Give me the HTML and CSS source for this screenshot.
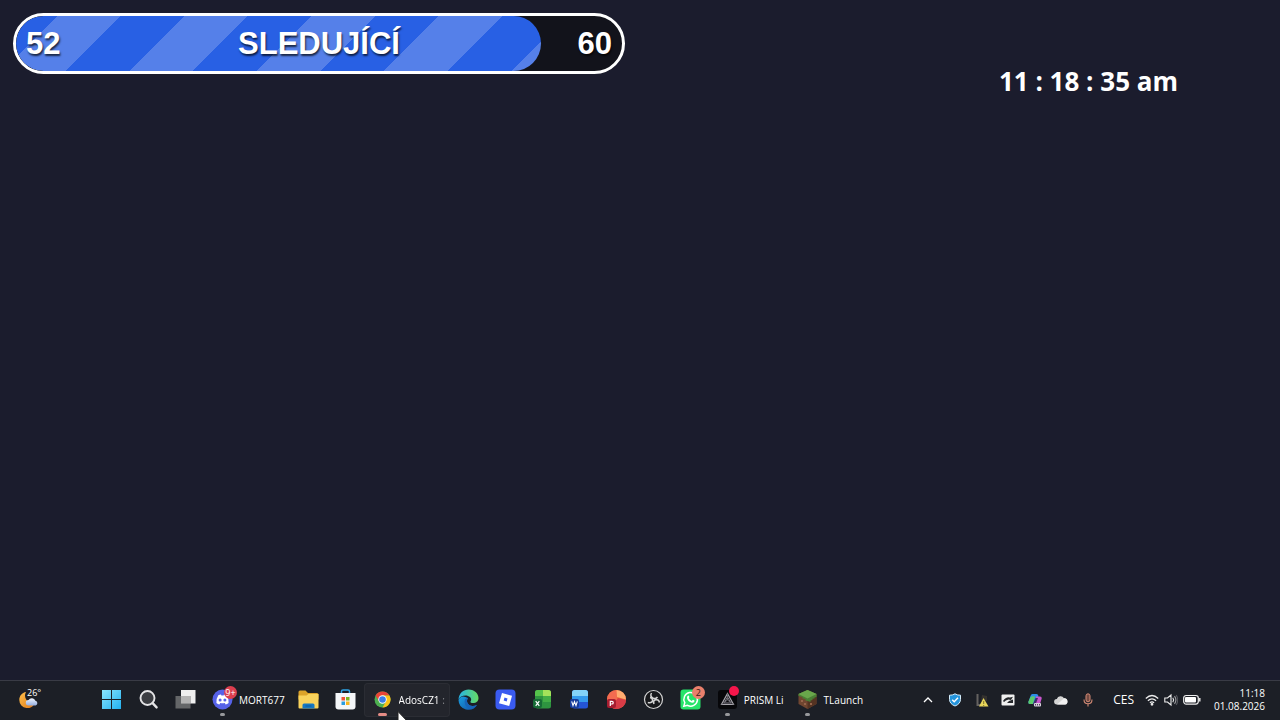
FILE: index.html
```html
<!DOCTYPE html>
<html lang="cs">
<head>
    <meta charset="UTF-8">
    <meta name="viewport" content="width=device-width, initial-scale=1.0">
    <title>Sledující</title>
    <link rel="stylesheet" href="styles.css">
</head>
<body>
    <main class="overlay">
        <div class="goal" role="progressbar" aria-label="Sledující" aria-valuemin="0" aria-valuemax="60" aria-valuenow="52">
            <div class="goal-fill" style="width: 86.67%"></div>
            <span class="goal-current">52</span>
            <span class="goal-title">SLEDUJÍCÍ</span>
            <span class="goal-target">60</span>
        </div>
        <time class="clock">11 : 18 : 35 am</time>
    </main>

    <footer class="taskbar">
        <button class="weather" aria-label="Weather">
            <svg width="20" height="20" viewBox="0 0 20 20">
                <defs><linearGradient id="moon" x1="0" y1="0" x2="1" y2="1"><stop offset="0" stop-color="#ffc04a"/><stop offset="1" stop-color="#e07a1c"/></linearGradient>
                <linearGradient id="cloud" x1="0" y1="0" x2="0" y2="1"><stop offset="0" stop-color="#f2f6ff"/><stop offset="1" stop-color="#93addf"/></linearGradient></defs>
                <path d="M7 2C4 7 8 13 15 14.500C13 17.500 10 18.500 7.500 18A8 8 0 0 1 0.300 10C0.300 6 3 2.600 7 2Z" fill="url(#moon)"/>
                <path d="M9.500 15.500a2.700 2.700 0 0 1 0-5.400a3.900 3.900 0 0 1 6.900 0.600a2.500 2.500 0 0 1 0.300 4.800Z" fill="url(#cloud)"/>
            </svg>
            <span class="weather-temp">26°</span>
        </button>

        <nav class="apps" aria-label="Apps">
            <button class="app" aria-label="Start">
                <svg width="21" height="21" viewBox="0 0 21 21">
                    <defs><linearGradient id="win" x1="0" y1="0" x2="1" y2="1" ><stop offset="0" stop-color="#8be6ff"/><stop offset="1" stop-color="#22b0ef"/></linearGradient></defs>
                    <path d="M1 1h9v9H1zM11 1h9v9h-9zM1 11h9v9H1zM11 11h9v9h-9z" fill="url(#win)"/>
                </svg>
            </button>
            <button class="app" aria-label="Search">
                <svg width="21" height="21" viewBox="0 0 21 21">
                    <circle cx="9.500" cy="9" r="7" fill="#3b3d42" stroke="#e4e4e6" stroke-width="1.900"/>
                    <path d="M14.600 14.200l4 4.200" stroke="#e4e4e6" stroke-width="2.400" stroke-linecap="round"/>
                </svg>
            </button>
            <button class="app" aria-label="Task view">
                <svg width="21" height="21" viewBox="0 0 21 21">
                    <path d="M6 1h14.500v13.500H6z" fill="#efefef"/>
                    <path d="M0.500 7H15.500V19.500H0.500z" fill="#6d6e70" fill-opacity="0.900"/>
                    <path d="M6 7h9.500v7.500H6z" fill="#b4b4b4"/>
                </svg>
            </button>
            <button class="app labelled running">
                <svg width="21" height="21" viewBox="0 0 21 21">
                    <circle cx="10.500" cy="10.500" r="10" fill="#5662e8"/>
                    <path d="M6.300 6.300Q8 5.400 9 5.500l0.400 0.900h2.200l0.400-0.900q1 0 2.700 0.800q2.300 3.600 1.900 7.600q-1.500 1.200-3 1.500l-0.800-1.400q-2.300 0.500-4.600 0l-0.800 1.400q-1.500-0.300-3-1.500q-0.400-4 1.900-7.600Z" fill="#fff"/>
                    <circle cx="8.100" cy="10.900" r="1.500" fill="#5662e8"/><circle cx="12.900" cy="10.900" r="1.500" fill="#5662e8"/>
                </svg>
                <span class="badge badge-discord">9+</span>
                <span class="app-label">MORT677</span>
            </button>
            <button class="app" aria-label="File Explorer">
                <svg width="21" height="21" viewBox="0 0 21 21">
                    <path d="M0.500 3q0-1.500 1.500-1.500h5.500l2.500 2.500h9q1.500 0 1.500 1.500v5H0.500z" fill="#dca329"/>
                    <path d="M0.500 6.500h8L10.500 5H20.500v13.500q0 1-1 1h-18q-1 0-1-1z" fill="#f9d35c"/>
                    <path d="M4.500 19.500v-3.500q0-1.500 1.500-1.500h9q1.500 0 1.500 1.500v3.500z" fill="#1678c2"/>
                    <path d="M7.500 17h6" stroke="#0c5a9c"/>
                </svg>
            </button>
            <button class="app" aria-label="Microsoft Store">
                <svg width="21" height="21" viewBox="0 0 21 21">
                    <path d="M6.500 5V2.500q0-1.500 1.500-1.500h5q1.500 0 1.500 1.500V5" fill="none" stroke="#2da4e5" stroke-width="1.500"/>
                    <path d="M0.500 4h20v13.500q0 3-3 3h-14q-3 0-3-3z" fill="#f4f6f8"/>
                    <path d="M6.500 8h3.500v3.500H6.500z" fill="#ed5535"/><path d="M11 8h3.500v3.500H11z" fill="#7ab51d"/>
                    <path d="M6.500 12.500h3.500V16H6.500z" fill="#2a9de0"/><path d="M11 12.500h3.500V16H11z" fill="#f8b51c"/>
                </svg>
            </button>
            <button class="app labelled active running">
                <svg width="21" height="21" viewBox="0 0 21 21">
                    <circle cx="10.500" cy="10.500" r="8" fill="#4caf50"/>
                    <path d="M3.570 6.500A8 8 0 0 1 17.430 6.500H10.500L7.040 12.500Z" fill="#ea4335"/>
                    <path d="M17.430 6.500A8 8 0 0 1 10.500 18.500L13.960 12.500L10.500 6.500Z" fill="#fbc116"/>
                    <circle cx="10.500" cy="10.500" r="4.200" fill="#fff"/><circle cx="10.500" cy="10.500" r="3.300" fill="#3b7de8"/>
                </svg>
                <span class="app-label fade">AdosCZ1 :</span>
            </button>
            <button class="app" aria-label="Edge">
                <svg width="21" height="21" viewBox="0 0 21 21">
                    <defs><linearGradient id="edgeTop" x1="0" y1="0.500" x2="1" y2="0.500"><stop offset="0" stop-color="#26b5e8"/><stop offset="1" stop-color="#66db62"/></linearGradient>
                    <linearGradient id="edgeLow" x1="0" y1="0" x2="1" y2="1"><stop offset="0" stop-color="#1a9de0"/><stop offset="1" stop-color="#1153a8"/></linearGradient></defs>
                    <path d="M0.500 11A10 10 0 0 0 19 16Q12 18.500 9.500 14Q8 11 10 9Q3 5 0.500 11Z" fill="url(#edgeLow)"/>
                    <path d="M0.500 10.500C1 4 5.500 0.500 10.500 0.500C17 0.500 20.500 5 20.500 9C20.500 13 17 14.500 14 14Q11.500 13.500 13 11.500C14 9 11 6.500 7.500 6.500Q2.500 6.500 0.500 10.500Z" fill="url(#edgeTop)"/>
                    <path d="M7 10Q5 17 12 20Q16.500 19.500 19 16Q12 18.500 9.500 14Q8.500 11.500 10 9Z" fill="#1764b9"/>
                </svg>
            </button>
            <button class="app" aria-label="Roblox">
                <svg width="21" height="21" viewBox="0 0 21 21">
                    <rect x="0.500" y="0.500" width="20" height="20" rx="4" fill="#3a5bf0"/>
                    <path d="M7 4l10 2.800L14.200 17L4 14.200Z" fill="#fff"/><path d="M9.500 8.600l3 0.800l-0.800 3l-3-0.800Z" fill="#3a5bf0"/>
                </svg>
            </button>
            <button class="app" aria-label="Excel">
                <svg width="21" height="21" viewBox="0 0 21 21">
                    <rect x="3" y="1" width="16" height="18.500" rx="2.500" fill="#2e9440"/>
                    <path d="M11 1h5.500q2.500 0 2.500 2.500V7h-8z" fill="#a5e35a"/><path d="M5.500 1H11v6H3V3.500Q3 1 5.500 1Z" fill="#55c24b"/>
                    <path d="M11 7h8v6h-8z" fill="#43ae46"/><rect x="1" y="10" width="9" height="9" rx="2" fill="#176b36"/>
                    <path d="M3.700 12.200l3.600 4.600M7.300 12.200l-3.600 4.600" stroke="#fff" stroke-width="1.200"/>
                </svg>
            </button>
            <button class="app" aria-label="Word">
                <svg width="21" height="21" viewBox="0 0 21 21">
                    <rect x="3" y="1" width="16" height="18.500" rx="2.500" fill="#2455d6"/>
                    <path d="M3 7.500V3.500Q3 1 5.500 1h11q2.500 0 2.500 2.500v4z" fill="#83d3f8"/><path d="M3 7h16v6H3z" fill="#359bec"/>
                    <rect x="1" y="10" width="9" height="9" rx="2" fill="#173c9c"/>
                    <path d="M2.700 12.400l1.300 4.200l1.500-4l1.500 4l1.300-4.200" fill="none" stroke="#fff" stroke-width="1.100"/>
                </svg>
            </button>
            <button class="app" aria-label="PowerPoint">
                <svg width="21" height="21" viewBox="0 0 21 21">
                    <circle cx="10.500" cy="10.500" r="9.500" fill="#ef6b3b"/>
                    <path d="M10.500 1A9.500 9.500 0 0 0 1 10.500L11 11Z" fill="#f36b50"/>
                    <path d="M10.500 1A9.500 9.500 0 0 1 20 10.500L11 8Z" fill="#ffad70"/>
                    <path d="M20 11A9.500 9.500 0 0 1 5 18.200L12 9Z" fill="#d83b46"/>
                    <rect x="1" y="10" width="9" height="9" rx="2" fill="#a71d30"/>
                    <path d="M4.300 17v-4.700h1.600a1.300 1.300 0 0 1 0 2.700H4.300" fill="none" stroke="#fff" stroke-width="1.200"/>
                </svg>
            </button>
            <button class="app" aria-label="OBS Studio">
                <svg width="21" height="21" viewBox="0 0 21 21" fill="none" stroke="#d3d3d3">
                    <circle cx="10.500" cy="10.500" r="9" fill="#17181b" stroke-width="1.200"/>
                    <path d="M8.500 4Q6.500 7.500 10.500 9.500Q13 10 14.500 8M16.500 13.500Q15.800 9.800 11.800 11Q9.800 12.500 11 15M4.800 13.500Q8.800 14.500 9.700 11.500Q9.500 9 7 8.500" stroke-width="1.500"/>
                </svg>
            </button>
            <button class="app" aria-label="WhatsApp">
                <svg width="21" height="21" viewBox="0 0 21 21">
                    <rect x="0.500" y="0.500" width="20" height="20" rx="3" fill="#27e46a"/>
                    <path d="M3.800 17.200l1-3.500A6.800 6.800 0 1 1 7.500 16.300Z" fill="none" stroke="#fff" stroke-width="1.500"/>
                    <path d="M7.500 7q1-1.200 1.800 0.800q0.200 0.600-0.600 1.300q1 2 3 2.800l1-1q0.500-0.200 1.900 0.800q0 2.200-2.600 2Q7.500 12.500 7 9Q7 7.800 7.500 7Z" fill="#fff"/>
                </svg>
                <span class="badge badge-whatsapp">2</span>
            </button>
            <button class="app labelled running">
                <svg width="21" height="21" viewBox="0 0 21 21">
                    <rect x="1" y="1" width="19" height="19" rx="3" fill="#07070a"/>
                    <path d="M10.500 4.500L16.500 15.500H4.500Z" fill="none" stroke="#a7a5ac" stroke-width="1.200"/>
                    <path d="M10.500 8L14 14H7Z" fill="none" stroke="#85828c"/><path d="M10.500 4.500V11l6 4.500M10.500 11l-6 4.500" stroke="#68666e"  fill="none"/>
                </svg>
                <span class="badge badge-dot"></span>
                <span class="app-label">PRISM Li</span>
            </button>
            <button class="app labelled running">
                <svg width="21" height="21" viewBox="0 0 21 21">
                    <path d="M10.500 1L19.500 5v10L10.500 20L1.500 15V5Z" fill="#704630"/>
                    <path d="M10.500 9.500L19.500 5v10L10.500 20Z" fill="#543322"/>
                    <path d="M10.500 1L19.500 5v3l-2 0.500v1l-2 0.300v1.200l-2 0.500v1.500l-3-1l-2-0.500V10l-3-0.500V8l-4-1V5Z" fill="#4a7f35"/>
                    <path d="M10.500 1L19.500 5L10.500 9.500L1.500 5Z" fill="#69a64b"/>
                    <path d="M4 11h2v2H4zM7 14h2v2H7zM13 14h2v2h-2z" fill="#95644a"/>
                </svg>
                <span class="app-label">TLaunch</span>
            </button>
        </nav>

        <div class="tray">
            <div class="tray-icons">
                <button class="tray-icon" aria-label="Show hidden icons">
                    <svg width="14" height="14" viewBox="0 0 14 14"><path d="M3 9l4-4l4 4" fill="none" stroke="#fff" stroke-width="1.300"/></svg>
                </button>
                <button class="tray-icon" aria-label="Security">
                    <svg width="14" height="14" viewBox="0 0 14 14"><path d="M7 0.800Q9.500 2.400 12.500 2.200V6.500Q12.300 11 7 13Q1.700 11 1.500 6.500V2.200Q4.500 2.400 7 0.800Z" fill="#2494dc" stroke="#d5edfb"/><path d="M4.200 6.700l2 2l3.800-4" fill="none" stroke="#fff" stroke-width="1.400"/></svg>
                </button>
                <button class="tray-icon" aria-label="Warning">
                    <svg width="14" height="14" viewBox="0 0 14 14"><path d="M1.500 1h2v10h3v2h-5z" fill="#646260"/><path d="M7 2l5 1v5H6z" fill="#34322f"/><path d="M8.500 5L13.500 13.500H4Z" fill="#e8d65b"/><path d="M8.700 8v3M8.700 12v1" stroke="#81752c"/></svg>
                </button>
                <button class="tray-icon" aria-label="Graphics">
                    <svg width="14" height="14" viewBox="0 0 14 14"><rect x="0.500" y="1.500" width="13" height="11" rx="1" fill="#f0f0f0"/><path d="M2 8Q5 3.500 9 4.500l3-0.700L10 7L7.500 6.500Q4.500 7 3 9M8 8l4-1.500V10H6Z" fill="#25272b"/></svg>
                </button>
                <button class="tray-icon" aria-label="Copilot">
                    <svg width="14" height="14" viewBox="0 0 14 14">
                        <path d="M4.500 1h4q1.500 0 2 2L8 9.500Q7.500 11 6 11H2Q0 11 0.500 8.500L2.500 3Q3 1 4.500 1Z" fill="#2d8ee8"/>
                        <path d="M2.500 4Q3.500 3 7 3.500L5 11H2Q0 11 0.500 8.500Z" fill="#5bcb6b"/>
                        <path d="M8 3.500h4q2 0 1.700 2L12 11q-0.500 2-2.500 2H6Q7.500 12.500 8 10Z" fill="#c956ce"/>
                        <path d="M7.500 5L5 11l1 1.500Q8 12 8.500 9L10 5Z" fill="#402b68"/><rect x="6" y="10" width="7" height="3.500" rx="1" fill="#d8d0df"/><path d="M7.500 11v1.500M9.500 11v1.500M11.500 11v1.500" stroke="#59465e"/>
                    </svg>
                </button>
                <button class="tray-icon" aria-label="OneDrive">
                    <svg width="14" height="14" viewBox="0 0 14 14"><path d="M3 11.500a2.800 2.800 0 0 1-0.200-5.600A4 4 0 0 1 10 5.200a3.200 3.200 0 0 1 1 6.300Z" fill="#d4d4d4"/><path d="M3 11.500L10 5.200a3.200 3.200 0 0 1 1 6.300Z" fill="#f1f1f1"/></svg>
                </button>
                <button class="tray-icon" aria-label="Microphone">
                    <svg width="14" height="14" viewBox="0 0 14 14" fill="none" stroke="#d58b76"><rect x="5" y="0.800" width="4" height="8" rx="2" fill="#734b42"/><path d="M3 6.500Q3 10.800 7 10.800T11 6.500M7 10.800v2.700" stroke-width="1.100"/></svg>
                </button>
            </div>
            <button class="language">CES</button>
            <button class="quick-settings" aria-label="Network, sound, battery">
                <svg width="14" height="14" viewBox="0 0 14 14" fill="none" stroke="#eee" stroke-width="1.200"><path d="M0.800 5.500Q7-0.500 13.200 5.500M2.900 7.700Q7 4 11.100 7.700M4.900 9.800Q7 8 9.100 9.800"/><circle cx="7" cy="11.300" r="0.800" fill="#eee"/></svg>
                <svg width="14" height="14" viewBox="0 0 14 14" fill="none" stroke="#eee" stroke-width="1.100"><path d="M0.800 5h2.700L7 2v10L3.500 9H0.800ZM8.800 4.800q1.600 2.200 0 4.400"/><path d="M10.500 3.200q2.800 3.800 0 7.600" stroke="#a0a0a3"/><path d="M12.200 2q3 5 0 10" stroke="#55575d"/></svg>
                <svg width="18" height="14" viewBox="0 0 18 14"><rect x="0.700" y="2.500" width="14.600" height="8.600" rx="2.500" fill="none" stroke="#eee" stroke-width="1.200"/><rect x="2" y="4" width="11" height="5.600" rx="1" fill="#fff"/><path d="M16.800 5v3.600" stroke="#eee" stroke-width="1.400"/></svg>
            </button>
            <button class="datetime">
                <span>11:18</span>
                <span>01.08.2026</span>
            </button>
        </div>
    </footer>

    <svg class="cursor" width="14" height="20" viewBox="0 0 14 20"><path d="M1 0.500V17l3.800-3.600L7.500 19l2.500-1l-2.500-5.500h5Z" fill="#fff" stroke="#222"/></svg>
</body>
</html>
```
FILE: styles.css
```css
* {
    box-sizing: border-box;
}
body {
    display: flex;
    flex-direction: column;
    height: 100vh;
    margin: 0;
    overflow: hidden;
    background-color: #1b1c2d;
    color: white;
    font-family: "Open Sans", "Noto Sans", sans-serif;
}
button {
    border: none;
    padding: 0;
    background: none;
    color: inherit;
    font: inherit;
}
svg {
    display: block;
    flex-shrink: 0;
}
.overlay {
    display: flex;
    flex: 1;
    align-items: flex-start;
    justify-content: space-between;
    padding: 13px;
}

/* follower goal */
.goal {
    position: relative;
    display: flex;
    align-items: center;
    justify-content: space-between;
    width: 49%;
    max-width: 612px;
    height: 61px;
    padding: 0 10px;
    border: 3px solid white;
    border-radius: 31px;
    overflow: hidden;
    background-color: #12131b;
    font-family: "Liberation Sans", Arial, sans-serif;
    font-size: 31px;
    font-weight: bold;
    line-height: 36px;
    text-shadow: 1px 2px 2px rgba(0, 0, 0, 0.7);
}
.goal-fill {
    position: absolute;
    top: 0;
    bottom: 0;
    left: 0;
    border-radius: 28px;
    background: repeating-linear-gradient(135deg, #2860e4 0, #2860e4 29px, #5580e9 29px, #5580e9 74px, #2860e4 74px, #2860e4 90px);
}
.goal span {
    position: relative;
}
.clock {
    margin: 50px 89px 0 0;
    font-size: 26px;
    font-weight: 700;
    line-height: 36px;
}

/* taskbar */
.taskbar {
    display: flex;
    align-items: center;
    height: 40px;
    padding-bottom: 2px;
    border-top: 1px solid #393b45;
    background-color: #1c1f26;
    font-size: 10px;
    line-height: 14px;
}
.weather {
    position: relative;
    width: 74px;
    margin-left: 19px;
}
.weather-temp {
    position: absolute;
    top: -3px;
    left: 8px;
    font-size: 9px;
    line-height: 12px;
}
.apps {
    display: flex;
}
.app {
    position: relative;
    display: flex;
    align-items: center;
    gap: 6px;
    height: 34px;
    padding: 0 8px;
    border-radius: 4px;
}
.app.labelled {
    padding-right: 5px;
}
.app.active {
    background-color: #23252c;
    box-shadow: inset 0 0 0 1px #2b2d34;
}
.app.running::after {
    content: "";
    position: absolute;
    bottom: 1px;
    left: 16px;
    width: 5px;
    height: 3px;
    border-radius: 2px;
    background-color: #98999c;
}
.app.active::after {
    left: 14px;
    width: 9px;
    background-color: #e58c86;
}
.app-label {
    white-space: nowrap;
}
.app-label.fade {
    mask-image: linear-gradient(to right, black 85%, rgba(0, 0, 0, 0.3));
}
.badge {
    position: absolute;
    top: 3px;
    left: 20px;
    width: 13px;
    height: 13px;
    border-radius: 50%;
    font-size: 9px;
    line-height: 13px;
    text-align: center;
}
.badge-discord {
    background-color: #dc3f4f;
}
.badge-whatsapp {
    background-color: #e9806c;
    color: #3a1712;
}
.badge-dot {
    width: 10px;
    height: 10px;
    background-color: #f5164b;
}

/* system tray */
.tray {
    display: flex;
    align-items: center;
    margin-left: auto;
    padding-right: 15px;
}
.tray-icons {
    display: flex;
    justify-content: space-between;
    width: 174px;
}
.language {
    margin-left: 18px;
    font-size: 12px;
}
.quick-settings {
    display: flex;
    gap: 5px;
    margin: 0 13px 0 11px;
}
.datetime {
    display: flex;
    flex-direction: column;
    font-size: 10px;
    line-height: 13px;
    text-align: right;
}
.cursor {
    position: fixed;
    left: 397px;
    bottom: -11px;
}
```
